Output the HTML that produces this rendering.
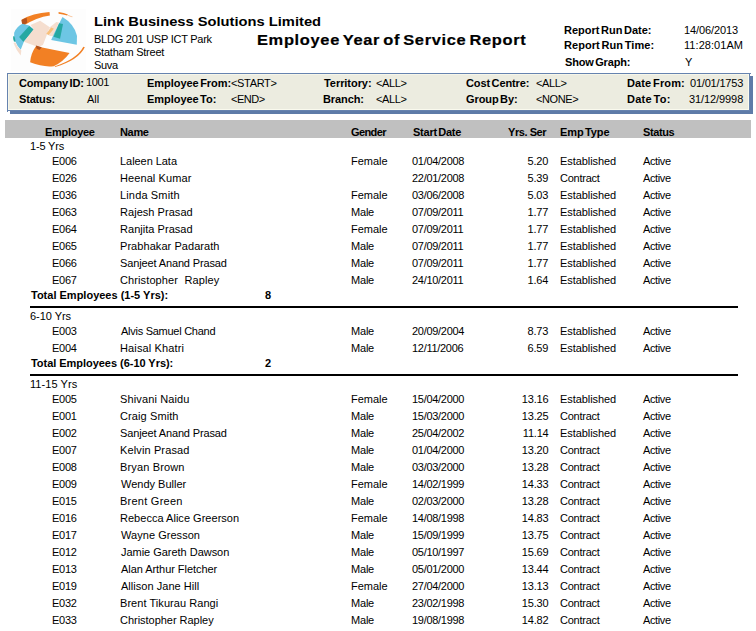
<!DOCTYPE html>
<html><head><meta charset="utf-8"><style>
html,body{margin:0;padding:0;background:#fff;width:756px;height:631px;overflow:hidden;position:relative}
div{position:absolute;white-space:pre}
.r{font:11px "Liberation Sans",sans-serif;line-height:13px;color:#000}
.b{font:bold 11px "Liberation Sans",sans-serif;line-height:13px;color:#000}
.co{font:bold 13px "Liberation Sans",sans-serif;line-height:15px;color:#000}
.ti{font:bold 15.5px "Liberation Sans",sans-serif;line-height:17px;color:#000;-webkit-text-stroke:0.2px #000}
.hl{left:30px;width:708px;height:2px;background:#000}
#box{left:7px;top:73px;width:739px;height:34px;border:1px solid #6683AF;background:#ECECE0;box-shadow:inset -1px -1px 0 #FAFAEE, inset 1px 1px 0 #F6F6EA;padding:1px}
#shadow{left:10px;top:111px;width:743px;height:3px;background:#5E7BA8}
#shadowr{left:750px;top:76px;width:3px;height:38px;background:#5E7BA8}
#bar{left:5px;top:120px;width:746px;height:18px;background:#C0C0C0}
</style></head><body>
<div id="shadow"></div><div id="shadowr"></div>
<div id="box"></div>
<div style="left:7px;top:111px;width:1px;height:1px;background:#6683AF"></div>
<div style="left:750px;top:73px;width:1px;height:1px;background:#6683AF"></div>
<div id="bar"></div>
<div style="left:11px;top:9px;width:75px;height:62px;background:#FDFDFD"></div>
<svg style="position:absolute;left:8px;top:8px" width="80" height="64" viewBox="0 0 756 605">
<path fill="#F28024" d="M128,112 Q230,48 392,38 L396,70 Q270,86 136,172 Z"/>
<path fill="#B4521C" d="M128,114 Q150,102 176,92 L182,138 Q160,152 136,172 Z"/>
<path fill="#F28024" d="M478,38 Q530,44 566,62 L560,72 Q520,58 478,54 Z"/>
<path fill="#F28024" d="M570,66 L612,82 L606,88 L566,74 Z" opacity="0.5"/>
<path fill="#6DC6E4" d="M136,150 L200,165 L245,205 L150,320 L120,395 Q48,320 58,235 Q85,172 136,150 Z"/>
<path fill="#26A8A2" d="M105,275 L200,170 L245,205 L145,320 Z"/>
<path fill="#26A8A2" d="M48,268 L62,270 L72,318 L56,316 Q46,290 48,268 Z"/>
<path fill="#F5DECF" d="M213,161 L304,121 L395,181 L330,350 L285,368 L150,318 L242,202 Z"/>
<path fill="#F5DECF" d="M395,181 L457,133 L482,138 L431,264 L398,264 L375,252 Z"/>
<path fill="#F9C07A" d="M408,184 L434,196 L384,256 L362,244 Z"/>
<path fill="#6DC6E4" d="M515,85 Q625,150 652,262 L650,348 L408,302 L440,232 Z"/>
<path fill="#26A8A2" d="M483,143 L520,152 L492,290 L430,272 Z"/>
<path fill="#F28024" d="M264,362 L582,425 Q522,508 432,550 Q330,562 209,514 Q215,430 264,362 Z"/>
<path fill="#B4521C" d="M264,355 L319,371 L297,396 L269,382 Z"/>
<path fill="#F5DECF" d="M52,330 Q78,400 120,448 L126,402 Q86,372 70,325 Z"/>
<path fill="#F28024" d="M712,366 Q652,482 440,552 L446,558 Q668,494 726,372 Z"/>
</svg>

<div class="co" style="left:93.87px;top:14px;transform:scaleX(1.1307);transform-origin:0 0">Link Business Solutions Limited</div>
<div class="r" style="left:94.00px;top:33px;letter-spacing:-0.250px;word-spacing:0.0px">BLDG 201 USP ICT Park</div>
<div class="r" style="left:94.00px;top:46px;letter-spacing:-0.231px;word-spacing:0.0px">Statham Street</div>
<div class="r" style="left:94.00px;top:59px;letter-spacing:-0.333px;word-spacing:0.0px">Suva</div>
<div class="ti" style="left:256.94px;top:31px;letter-spacing:0.628px;word-spacing:-2.0px;transform:scaleX(1.06);transform-origin:0 0">Employee Year of Service Report</div>
<div class="b" style="left:564.00px;top:24px;letter-spacing:0.000px;word-spacing:-1.5px">Report Run Date:</div>
<div class="b" style="left:564.00px;top:39px;letter-spacing:0.067px;word-spacing:-1.5px">Report Run Time:</div>
<div class="b" style="left:565.00px;top:56px;letter-spacing:-0.150px;word-spacing:-1.5px">Show Graph:</div>
<div class="r" style="left:684.00px;top:24px;letter-spacing:-0.111px;word-spacing:0.0px">14/06/2013</div>
<div class="r" style="left:684.00px;top:39px;letter-spacing:0.056px;word-spacing:0.0px">11:28:01AM</div>
<div class="r" style="left:685.00px;top:56px;letter-spacing:0.000px;word-spacing:0.0px">Y</div>
<div class="b" style="left:19.00px;top:77px;letter-spacing:-0.150px;word-spacing:-1.5px">Company ID:</div>
<div class="r" style="left:86.00px;top:76px;letter-spacing:-0.333px;word-spacing:0.0px">1001</div>
<div class="b" style="left:19.00px;top:93px;letter-spacing:-0.167px;word-spacing:0.0px">Status:</div>
<div class="r" style="left:87.00px;top:93px;letter-spacing:0.000px;word-spacing:0.0px">All</div>
<div class="b" style="left:147.00px;top:77px;letter-spacing:-0.038px;word-spacing:-1.5px">Employee From:</div>
<div class="r" style="left:231.00px;top:77px;letter-spacing:-0.333px;word-spacing:0.0px">&lt;START&gt;</div>
<div class="b" style="left:147.00px;top:93px;letter-spacing:-0.045px;word-spacing:-1.5px">Employee To:</div>
<div class="r" style="left:231.00px;top:93px;letter-spacing:-0.500px;word-spacing:0.0px">&lt;END&gt;</div>
<div class="b" style="left:324.00px;top:77px;letter-spacing:-0.056px;word-spacing:0.0px">Territory:</div>
<div class="r" style="left:376.00px;top:77px;letter-spacing:-0.350px;word-spacing:0.0px">&lt;ALL&gt;</div>
<div class="b" style="left:323.00px;top:93px;letter-spacing:-0.100px;word-spacing:0.0px">Branch:</div>
<div class="r" style="left:376.00px;top:93px;letter-spacing:-0.350px;word-spacing:0.0px">&lt;ALL&gt;</div>
<div class="b" style="left:466.00px;top:77px;letter-spacing:-0.091px;word-spacing:-1.5px">Cost Centre:</div>
<div class="r" style="left:536.00px;top:77px;letter-spacing:-0.350px;word-spacing:0.0px">&lt;ALL&gt;</div>
<div class="b" style="left:466.00px;top:93px;letter-spacing:-0.088px;word-spacing:-1.5px">Group By:</div>
<div class="r" style="left:536.00px;top:93px;letter-spacing:-0.400px;word-spacing:0.0px">&lt;NONE&gt;</div>
<div class="b" style="left:627.00px;top:77px;letter-spacing:0.133px;word-spacing:-1.5px">Date From:</div>
<div class="r" style="left:690.00px;top:77px;letter-spacing:-0.200px;word-spacing:0.0px">01/01/1753</div>
<div class="b" style="left:627.00px;top:93px;letter-spacing:0.243px;word-spacing:-1.5px">Date To:</div>
<div class="r" style="left:689.00px;top:93px;letter-spacing:-0.089px;word-spacing:0.0px">31/12/9998</div>
<div class="b" style="left:45.00px;top:126px;letter-spacing:-0.286px;word-spacing:0.0px">Employee</div>
<div class="b" style="left:120.00px;top:126px;letter-spacing:-0.333px;word-spacing:0.0px">Name</div>
<div class="b" style="left:351.00px;top:126px;letter-spacing:-0.600px;word-spacing:0.0px">Gender</div>
<div class="b" style="left:413.00px;top:126px;letter-spacing:-0.233px;word-spacing:-1.5px">Start Date</div>
<div class="b" style="left:508.00px;top:126px;letter-spacing:-0.429px;word-spacing:0.0px">Yrs. Ser</div>
<div class="b" style="left:560.00px;top:126px;letter-spacing:-0.100px;word-spacing:-1.5px">Emp Type</div>
<div class="b" style="left:643.00px;top:126px;letter-spacing:-0.400px;word-spacing:0.0px">Status</div>
<div class="r" style="left:30.00px;top:140px;letter-spacing:-0.167px;word-spacing:0.0px">1-5 Yrs</div>
<div class="r" style="left:52.00px;top:155px;letter-spacing:-0.270px;word-spacing:0.0px">E006</div>
<div class="r" style="left:120.00px;top:155px;letter-spacing:-0.050px;word-spacing:0.0px">Laleen Lata</div>
<div class="r" style="left:351.00px;top:155px;letter-spacing:0.000px;word-spacing:0.0px">Female</div>
<div class="r" style="left:412.00px;top:155px;letter-spacing:-0.290px">01/04/2008</div>
<div class="r" style="left:527.60px;top:155px;letter-spacing:-0.200px;word-spacing:0.0px">5.20</div>
<div class="r" style="left:560.00px;top:155px;letter-spacing:-0.070px;word-spacing:0.0px">Established</div>
<div class="r" style="left:643.00px;top:155px;letter-spacing:-0.380px;word-spacing:0.0px">Active</div>
<div class="r" style="left:52.00px;top:172px;letter-spacing:-0.270px;word-spacing:0.0px">E026</div>
<div class="r" style="left:120.00px;top:172px;letter-spacing:0.091px;word-spacing:0.0px">Heenal Kumar</div>
<div class="r" style="left:412.00px;top:172px;letter-spacing:-0.290px">22/01/2008</div>
<div class="r" style="left:527.60px;top:172px;letter-spacing:-0.200px;word-spacing:0.0px">5.39</div>
<div class="r" style="left:560.00px;top:172px;letter-spacing:-0.250px;word-spacing:0.0px">Contract</div>
<div class="r" style="left:643.00px;top:172px;letter-spacing:-0.380px;word-spacing:0.0px">Active</div>
<div class="r" style="left:52.00px;top:189px;letter-spacing:-0.270px;word-spacing:0.0px">E036</div>
<div class="r" style="left:120.00px;top:189px;letter-spacing:0.150px;word-spacing:0.0px">Linda Smith</div>
<div class="r" style="left:351.00px;top:189px;letter-spacing:0.000px;word-spacing:0.0px">Female</div>
<div class="r" style="left:412.00px;top:189px;letter-spacing:-0.290px">03/06/2008</div>
<div class="r" style="left:527.60px;top:189px;letter-spacing:-0.200px;word-spacing:0.0px">5.03</div>
<div class="r" style="left:560.00px;top:189px;letter-spacing:-0.070px;word-spacing:0.0px">Established</div>
<div class="r" style="left:643.00px;top:189px;letter-spacing:-0.380px;word-spacing:0.0px">Active</div>
<div class="r" style="left:52.00px;top:206px;letter-spacing:-0.270px;word-spacing:0.0px">E063</div>
<div class="r" style="left:120.00px;top:206px;letter-spacing:0.042px;word-spacing:0.0px">Rajesh Prasad</div>
<div class="r" style="left:351.00px;top:206px;letter-spacing:-0.200px;word-spacing:0.0px">Male</div>
<div class="r" style="left:412.00px;top:206px;letter-spacing:-0.290px">07/09/2011</div>
<div class="r" style="left:527.60px;top:206px;letter-spacing:-0.200px;word-spacing:0.0px">1.77</div>
<div class="r" style="left:560.00px;top:206px;letter-spacing:-0.070px;word-spacing:0.0px">Established</div>
<div class="r" style="left:643.00px;top:206px;letter-spacing:-0.380px;word-spacing:0.0px">Active</div>
<div class="r" style="left:52.00px;top:223px;letter-spacing:-0.270px;word-spacing:0.0px">E064</div>
<div class="r" style="left:120.00px;top:223px;letter-spacing:0.038px;word-spacing:0.0px">Ranjita Prasad</div>
<div class="r" style="left:351.00px;top:223px;letter-spacing:0.000px;word-spacing:0.0px">Female</div>
<div class="r" style="left:412.00px;top:223px;letter-spacing:-0.290px">07/09/2011</div>
<div class="r" style="left:527.60px;top:223px;letter-spacing:-0.200px;word-spacing:0.0px">1.77</div>
<div class="r" style="left:560.00px;top:223px;letter-spacing:-0.070px;word-spacing:0.0px">Established</div>
<div class="r" style="left:643.00px;top:223px;letter-spacing:-0.380px;word-spacing:0.0px">Active</div>
<div class="r" style="left:52.00px;top:240px;letter-spacing:-0.270px;word-spacing:0.0px">E065</div>
<div class="r" style="left:120.00px;top:240px;letter-spacing:0.059px;word-spacing:0.0px">Prabhakar Padarath</div>
<div class="r" style="left:351.00px;top:240px;letter-spacing:-0.200px;word-spacing:0.0px">Male</div>
<div class="r" style="left:412.00px;top:240px;letter-spacing:-0.290px">07/09/2011</div>
<div class="r" style="left:527.60px;top:240px;letter-spacing:-0.200px;word-spacing:0.0px">1.77</div>
<div class="r" style="left:560.00px;top:240px;letter-spacing:-0.070px;word-spacing:0.0px">Established</div>
<div class="r" style="left:643.00px;top:240px;letter-spacing:-0.380px;word-spacing:0.0px">Active</div>
<div class="r" style="left:52.00px;top:257px;letter-spacing:-0.270px;word-spacing:0.0px">E066</div>
<div class="r" style="left:120.00px;top:257px;letter-spacing:-0.132px;word-spacing:0.0px">Sanjeet Anand Prasad</div>
<div class="r" style="left:351.00px;top:257px;letter-spacing:-0.200px;word-spacing:0.0px">Male</div>
<div class="r" style="left:412.00px;top:257px;letter-spacing:-0.290px">07/09/2011</div>
<div class="r" style="left:527.60px;top:257px;letter-spacing:-0.200px;word-spacing:0.0px">1.77</div>
<div class="r" style="left:560.00px;top:257px;letter-spacing:-0.070px;word-spacing:0.0px">Established</div>
<div class="r" style="left:643.00px;top:257px;letter-spacing:-0.380px;word-spacing:0.0px">Active</div>
<div class="r" style="left:52.00px;top:274px;letter-spacing:-0.270px;word-spacing:0.0px">E067</div>
<div class="r" style="left:120.00px;top:274px;letter-spacing:0.111px;word-spacing:0.0px">Christopher  Rapley</div>
<div class="r" style="left:351.00px;top:274px;letter-spacing:-0.200px;word-spacing:0.0px">Male</div>
<div class="r" style="left:412.00px;top:274px;letter-spacing:-0.290px">24/10/2011</div>
<div class="r" style="left:527.60px;top:274px;letter-spacing:-0.200px;word-spacing:0.0px">1.64</div>
<div class="r" style="left:560.00px;top:274px;letter-spacing:-0.070px;word-spacing:0.0px">Established</div>
<div class="r" style="left:643.00px;top:274px;letter-spacing:-0.380px;word-spacing:0.0px">Active</div>
<div class="b" style="left:31.00px;top:289px;letter-spacing:0.000px;word-spacing:0.0px">Total Employees (1-5 Yrs):</div>
<div class="b" style="left:265.00px;top:289px;letter-spacing:0.000px;word-spacing:0.0px">8</div>
<div class="r" style="left:30.00px;top:310px;letter-spacing:-0.043px;word-spacing:0.0px">6-10 Yrs</div>
<div class="r" style="left:52.00px;top:325px;letter-spacing:-0.270px;word-spacing:0.0px">E003</div>
<div class="r" style="left:121.00px;top:325px;letter-spacing:-0.265px;word-spacing:0.0px">Alvis Samuel Chand</div>
<div class="r" style="left:351.00px;top:325px;letter-spacing:-0.200px;word-spacing:0.0px">Male</div>
<div class="r" style="left:412.00px;top:325px;letter-spacing:-0.290px">20/09/2004</div>
<div class="r" style="left:527.60px;top:325px;letter-spacing:-0.200px;word-spacing:0.0px">8.73</div>
<div class="r" style="left:560.00px;top:325px;letter-spacing:-0.070px;word-spacing:0.0px">Established</div>
<div class="r" style="left:643.00px;top:325px;letter-spacing:-0.380px;word-spacing:0.0px">Active</div>
<div class="r" style="left:52.00px;top:342px;letter-spacing:-0.270px;word-spacing:0.0px">E004</div>
<div class="r" style="left:120.00px;top:342px;letter-spacing:0.125px;word-spacing:0.0px">Haisal Khatri</div>
<div class="r" style="left:351.00px;top:342px;letter-spacing:-0.200px;word-spacing:0.0px">Male</div>
<div class="r" style="left:412.00px;top:342px;letter-spacing:-0.290px">12/11/2006</div>
<div class="r" style="left:527.60px;top:342px;letter-spacing:-0.200px;word-spacing:0.0px">6.59</div>
<div class="r" style="left:560.00px;top:342px;letter-spacing:-0.070px;word-spacing:0.0px">Established</div>
<div class="r" style="left:643.00px;top:342px;letter-spacing:-0.380px;word-spacing:0.0px">Active</div>
<div class="b" style="left:31.00px;top:357px;letter-spacing:-0.038px;word-spacing:0.0px">Total Employees (6-10 Yrs):</div>
<div class="b" style="left:265.00px;top:357px;letter-spacing:0.000px;word-spacing:0.0px">2</div>
<div class="r" style="left:30.00px;top:378px;letter-spacing:0.062px;word-spacing:0.0px">11-15 Yrs</div>
<div class="r" style="left:52.00px;top:393px;letter-spacing:-0.270px;word-spacing:0.0px">E005</div>
<div class="r" style="left:120.00px;top:393px;letter-spacing:0.125px;word-spacing:0.0px">Shivani Naidu</div>
<div class="r" style="left:351.00px;top:393px;letter-spacing:0.000px;word-spacing:0.0px">Female</div>
<div class="r" style="left:412.00px;top:393px;letter-spacing:-0.290px">15/04/2000</div>
<div class="r" style="left:521.80px;top:393px;letter-spacing:-0.200px;word-spacing:0.0px">13.16</div>
<div class="r" style="left:560.00px;top:393px;letter-spacing:-0.070px;word-spacing:0.0px">Established</div>
<div class="r" style="left:643.00px;top:393px;letter-spacing:-0.380px;word-spacing:0.0px">Active</div>
<div class="r" style="left:52.00px;top:410px;letter-spacing:-0.270px;word-spacing:0.0px">E001</div>
<div class="r" style="left:120.00px;top:410px;letter-spacing:0.100px;word-spacing:0.0px">Craig Smith</div>
<div class="r" style="left:351.00px;top:410px;letter-spacing:-0.200px;word-spacing:0.0px">Male</div>
<div class="r" style="left:412.00px;top:410px;letter-spacing:-0.290px">15/03/2000</div>
<div class="r" style="left:521.80px;top:410px;letter-spacing:-0.200px;word-spacing:0.0px">13.25</div>
<div class="r" style="left:560.00px;top:410px;letter-spacing:-0.250px;word-spacing:0.0px">Contract</div>
<div class="r" style="left:643.00px;top:410px;letter-spacing:-0.380px;word-spacing:0.0px">Active</div>
<div class="r" style="left:52.00px;top:427px;letter-spacing:-0.270px;word-spacing:0.0px">E002</div>
<div class="r" style="left:120.00px;top:427px;letter-spacing:-0.132px;word-spacing:0.0px">Sanjeet Anand Prasad</div>
<div class="r" style="left:351.00px;top:427px;letter-spacing:-0.200px;word-spacing:0.0px">Male</div>
<div class="r" style="left:412.00px;top:427px;letter-spacing:-0.290px">25/04/2002</div>
<div class="r" style="left:522.80px;top:427px;letter-spacing:-0.200px;word-spacing:0.0px">11.14</div>
<div class="r" style="left:560.00px;top:427px;letter-spacing:-0.070px;word-spacing:0.0px">Established</div>
<div class="r" style="left:643.00px;top:427px;letter-spacing:-0.380px;word-spacing:0.0px">Active</div>
<div class="r" style="left:52.00px;top:444px;letter-spacing:-0.270px;word-spacing:0.0px">E007</div>
<div class="r" style="left:120.00px;top:444px;letter-spacing:0.125px;word-spacing:0.0px">Kelvin Prasad</div>
<div class="r" style="left:351.00px;top:444px;letter-spacing:-0.200px;word-spacing:0.0px">Male</div>
<div class="r" style="left:412.00px;top:444px;letter-spacing:-0.290px">01/04/2000</div>
<div class="r" style="left:521.80px;top:444px;letter-spacing:-0.200px;word-spacing:0.0px">13.20</div>
<div class="r" style="left:560.00px;top:444px;letter-spacing:-0.250px;word-spacing:0.0px">Contract</div>
<div class="r" style="left:643.00px;top:444px;letter-spacing:-0.380px;word-spacing:0.0px">Active</div>
<div class="r" style="left:52.00px;top:461px;letter-spacing:-0.270px;word-spacing:0.0px">E008</div>
<div class="r" style="left:120.00px;top:461px;letter-spacing:0.150px;word-spacing:0.0px">Bryan Brown</div>
<div class="r" style="left:351.00px;top:461px;letter-spacing:-0.200px;word-spacing:0.0px">Male</div>
<div class="r" style="left:412.00px;top:461px;letter-spacing:-0.290px">03/03/2000</div>
<div class="r" style="left:521.80px;top:461px;letter-spacing:-0.200px;word-spacing:0.0px">13.28</div>
<div class="r" style="left:560.00px;top:461px;letter-spacing:-0.250px;word-spacing:0.0px">Contract</div>
<div class="r" style="left:643.00px;top:461px;letter-spacing:-0.380px;word-spacing:0.0px">Active</div>
<div class="r" style="left:52.00px;top:478px;letter-spacing:-0.270px;word-spacing:0.0px">E009</div>
<div class="r" style="left:121.00px;top:478px;letter-spacing:0.000px;word-spacing:0.0px">Wendy Buller</div>
<div class="r" style="left:351.00px;top:478px;letter-spacing:0.000px;word-spacing:0.0px">Female</div>
<div class="r" style="left:412.00px;top:478px;letter-spacing:-0.290px">14/02/1999</div>
<div class="r" style="left:521.80px;top:478px;letter-spacing:-0.200px;word-spacing:0.0px">14.33</div>
<div class="r" style="left:560.00px;top:478px;letter-spacing:-0.250px;word-spacing:0.0px">Contract</div>
<div class="r" style="left:643.00px;top:478px;letter-spacing:-0.380px;word-spacing:0.0px">Active</div>
<div class="r" style="left:52.00px;top:495px;letter-spacing:-0.270px;word-spacing:0.0px">E015</div>
<div class="r" style="left:120.00px;top:495px;letter-spacing:0.250px;word-spacing:0.0px">Brent Green</div>
<div class="r" style="left:351.00px;top:495px;letter-spacing:-0.200px;word-spacing:0.0px">Male</div>
<div class="r" style="left:412.00px;top:495px;letter-spacing:-0.290px">02/03/2000</div>
<div class="r" style="left:521.80px;top:495px;letter-spacing:-0.200px;word-spacing:0.0px">13.28</div>
<div class="r" style="left:560.00px;top:495px;letter-spacing:-0.250px;word-spacing:0.0px">Contract</div>
<div class="r" style="left:643.00px;top:495px;letter-spacing:-0.380px;word-spacing:0.0px">Active</div>
<div class="r" style="left:52.00px;top:512px;letter-spacing:-0.270px;word-spacing:0.0px">E016</div>
<div class="r" style="left:120.00px;top:512px;letter-spacing:0.024px;word-spacing:0.0px">Rebecca Alice Greerson</div>
<div class="r" style="left:351.00px;top:512px;letter-spacing:0.000px;word-spacing:0.0px">Female</div>
<div class="r" style="left:412.00px;top:512px;letter-spacing:-0.290px">14/08/1998</div>
<div class="r" style="left:521.80px;top:512px;letter-spacing:-0.200px;word-spacing:0.0px">14.83</div>
<div class="r" style="left:560.00px;top:512px;letter-spacing:-0.250px;word-spacing:0.0px">Contract</div>
<div class="r" style="left:643.00px;top:512px;letter-spacing:-0.380px;word-spacing:0.0px">Active</div>
<div class="r" style="left:52.00px;top:529px;letter-spacing:-0.270px;word-spacing:0.0px">E017</div>
<div class="r" style="left:121.00px;top:529px;letter-spacing:0.042px;word-spacing:0.0px">Wayne Gresson</div>
<div class="r" style="left:351.00px;top:529px;letter-spacing:-0.200px;word-spacing:0.0px">Male</div>
<div class="r" style="left:412.00px;top:529px;letter-spacing:-0.290px">15/09/1999</div>
<div class="r" style="left:521.80px;top:529px;letter-spacing:-0.200px;word-spacing:0.0px">13.75</div>
<div class="r" style="left:560.00px;top:529px;letter-spacing:-0.250px;word-spacing:0.0px">Contract</div>
<div class="r" style="left:643.00px;top:529px;letter-spacing:-0.380px;word-spacing:0.0px">Active</div>
<div class="r" style="left:52.00px;top:546px;letter-spacing:-0.270px;word-spacing:0.0px">E012</div>
<div class="r" style="left:121.00px;top:546px;letter-spacing:-0.028px;word-spacing:0.0px">Jamie Gareth Dawson</div>
<div class="r" style="left:351.00px;top:546px;letter-spacing:-0.200px;word-spacing:0.0px">Male</div>
<div class="r" style="left:412.00px;top:546px;letter-spacing:-0.290px">05/10/1997</div>
<div class="r" style="left:521.80px;top:546px;letter-spacing:-0.200px;word-spacing:0.0px">15.69</div>
<div class="r" style="left:560.00px;top:546px;letter-spacing:-0.250px;word-spacing:0.0px">Contract</div>
<div class="r" style="left:643.00px;top:546px;letter-spacing:-0.380px;word-spacing:0.0px">Active</div>
<div class="r" style="left:52.00px;top:563px;letter-spacing:-0.270px;word-spacing:0.0px">E013</div>
<div class="r" style="left:121.00px;top:563px;letter-spacing:-0.053px;word-spacing:0.0px">Alan Arthur Fletcher</div>
<div class="r" style="left:351.00px;top:563px;letter-spacing:-0.200px;word-spacing:0.0px">Male</div>
<div class="r" style="left:412.00px;top:563px;letter-spacing:-0.290px">05/01/2000</div>
<div class="r" style="left:521.80px;top:563px;letter-spacing:-0.200px;word-spacing:0.0px">13.44</div>
<div class="r" style="left:560.00px;top:563px;letter-spacing:-0.250px;word-spacing:0.0px">Contract</div>
<div class="r" style="left:643.00px;top:563px;letter-spacing:-0.380px;word-spacing:0.0px">Active</div>
<div class="r" style="left:52.00px;top:580px;letter-spacing:-0.270px;word-spacing:0.0px">E019</div>
<div class="r" style="left:121.00px;top:580px;letter-spacing:0.031px;word-spacing:0.0px">Allison Jane Hill</div>
<div class="r" style="left:351.00px;top:580px;letter-spacing:0.000px;word-spacing:0.0px">Female</div>
<div class="r" style="left:412.00px;top:580px;letter-spacing:-0.290px">27/04/2000</div>
<div class="r" style="left:521.80px;top:580px;letter-spacing:-0.200px;word-spacing:0.0px">13.13</div>
<div class="r" style="left:560.00px;top:580px;letter-spacing:-0.250px;word-spacing:0.0px">Contract</div>
<div class="r" style="left:643.00px;top:580px;letter-spacing:-0.380px;word-spacing:0.0px">Active</div>
<div class="r" style="left:52.00px;top:597px;letter-spacing:-0.270px;word-spacing:0.0px">E032</div>
<div class="r" style="left:120.00px;top:597px;letter-spacing:0.056px;word-spacing:0.0px">Brent Tikurau Rangi</div>
<div class="r" style="left:351.00px;top:597px;letter-spacing:-0.200px;word-spacing:0.0px">Male</div>
<div class="r" style="left:412.00px;top:597px;letter-spacing:-0.290px">23/02/1998</div>
<div class="r" style="left:521.80px;top:597px;letter-spacing:-0.200px;word-spacing:0.0px">15.30</div>
<div class="r" style="left:560.00px;top:597px;letter-spacing:-0.250px;word-spacing:0.0px">Contract</div>
<div class="r" style="left:643.00px;top:597px;letter-spacing:-0.380px;word-spacing:0.0px">Active</div>
<div class="r" style="left:52.00px;top:614px;letter-spacing:-0.270px;word-spacing:0.0px">E033</div>
<div class="r" style="left:120.00px;top:614px;letter-spacing:-0.029px;word-spacing:0.0px">Christopher Rapley</div>
<div class="r" style="left:351.00px;top:614px;letter-spacing:-0.200px;word-spacing:0.0px">Male</div>
<div class="r" style="left:412.00px;top:614px;letter-spacing:-0.290px">19/08/1998</div>
<div class="r" style="left:521.80px;top:614px;letter-spacing:-0.200px;word-spacing:0.0px">14.82</div>
<div class="r" style="left:560.00px;top:614px;letter-spacing:-0.250px;word-spacing:0.0px">Contract</div>
<div class="r" style="left:643.00px;top:614px;letter-spacing:-0.380px;word-spacing:0.0px">Active</div>
<div class="hl" style="top:306px"></div>
<div class="hl" style="top:374px"></div>
</body></html>
